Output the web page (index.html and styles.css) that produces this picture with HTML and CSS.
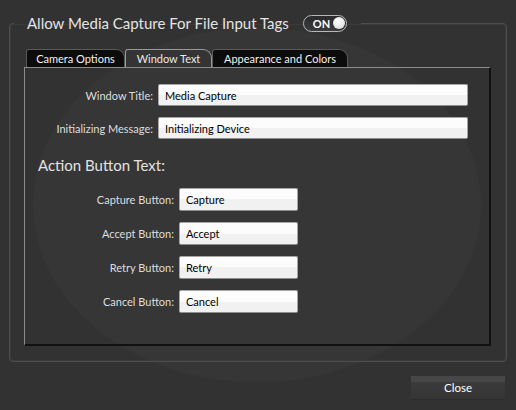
FILE: index.html
```html
<!DOCTYPE html>
<html>
<head>
<meta charset="utf-8">
<link rel="stylesheet" href="styles.css">
</head>
<body>
<div class="page">
  <fieldset class="group">
    <legend class="legend">
      <span class="title">Allow Media Capture For File Input Tags</span>
      <span class="toggle"><span class="toggle-text">ON</span><span class="knob"></span></span>
    </legend>
    <div class="inner">
      <div class="tabs">
        <div class="tab">Camera Options</div>
        <div class="tab active">Window Text</div>
        <div class="tab">Appearance and Colors</div>
      </div>
      <div class="panel">
        <div class="form wide">
          <label class="label">Window Title:</label>
          <input class="field" type="text" value="Media Capture">
          <label class="label">Initializing Message:</label>
          <input class="field" type="text" value="Initializing Device">
        </div>
        <div class="heading">Action Button Text:</div>
        <div class="form narrow">
          <label class="label">Capture Button:</label>
          <input class="field" type="text" value="Capture">
          <label class="label">Accept Button:</label>
          <input class="field" type="text" value="Accept">
          <label class="label">Retry Button:</label>
          <input class="field" type="text" value="Retry">
          <label class="label">Cancel Button:</label>
          <input class="field" type="text" value="Cancel">
        </div>
      </div>
    </div>
  </fieldset>
  <div class="footer">
    <button class="close">Close</button>
  </div>
</div>
</body>
</html>
```
FILE: styles.css
```css
html, body {
  margin: 0;
  padding: 0;
}
body {
  width: 516px;
  height: 410px;
  overflow: hidden;
  background: #323232;
  font-family: Lato, "Open Sans", sans-serif;
  color: #e2e2e2;
}
.page {
  width: 516px;
  height: 410px;
  box-sizing: border-box;
  padding-top: 13px;
  background: radial-gradient(225px 178px at 257px 205px, #363636 0, #363636 99%, #323232 100%);
  display: flex;
  flex-direction: column;
}
.group {
  margin: 0 9px 0 9px;
  padding: 0;
  min-inline-size: 0;
  border: 1px solid #4e4e4e;
  box-shadow: inset 0 0 0 1px #3a3a3a;
  border-radius: 4px;
}
.legend {
  margin-left: 4px;
  padding: 0 14px 0 13px;
  height: 20px;
  display: flex;
  align-items: center;
  gap: 14px;
}
.title {
  font-size: 15px;
  line-height: 20px;
  color: #e4e4e4;
}
.toggle {
  width: 44px;
  height: 17px;
  box-sizing: border-box;
  border: 1px solid #b8b8b8;
  border-radius: 9px;
  background: linear-gradient(#2a2a2a, #3c3c3c);
  display: flex;
  align-items: center;
  padding: 0 1px 0 9px;
  justify-content: space-between;
}
.toggle-text {
  font-size: 11px;
  font-weight: bold;
  color: #ffffff;
  line-height: 13px;
}
.knob {
  width: 12px;
  height: 12px;
  border-radius: 50%;
  background: radial-gradient(circle at 40% 35%, #ffffff, #d6d6d6);
}
.inner {
  margin: 16px 15px 15px 14px;
}
.tabs {
  display: flex;
  padding-left: 2px;
  height: 18px;
}
.tab {
  box-sizing: border-box;
  height: 18px;
  font-size: 11px;
  line-height: 17px;
  color: #f2f2f2;
  text-align: center;
  background: #0c0c0c;
  border: 1px solid #5a5a5a;
  border-bottom: none;
  border-radius: 3px 9px 0 0;
}
.tab:nth-child(1) { width: 99px; }
.tab:nth-child(2) { width: 87px; }
.tab:nth-child(3) { width: 136px; }
.tab.active {
  background: #343434;
  border-color: #9a9a9a;
  color: #eaeaea;
}
.panel {
  box-sizing: border-box;
  height: 279px;
  border-top: 1px solid #8c8c8c;
  border-left: 1px solid #8c8c8c;
  border-right: 2px solid #111111;
  border-bottom: 2px solid #111111;
  padding-top: 16px;
}
.form {
  display: grid;
  column-gap: 5px;
  align-items: center;
}
.form.wide {
  grid-template-columns: 128px 310px;
  row-gap: 11px;
}
.form.narrow {
  grid-template-columns: 149px 119px;
  row-gap: 11px;
}
.label {
  text-align: right;
  font-size: 11px;
  color: #dedede;
  white-space: nowrap;
}
.field {
  box-sizing: border-box;
  height: 22px;
  margin: 0;
  padding: 0 6px;
  border: 1px solid #a6a6a6;
  border-bottom-color: #8e8e8e;
  border-radius: 2px;
  background: linear-gradient(#fcfcfc 0, #fcfcfc 50%, #f1f1f1 50%, #f1f1f1 100%);
  font-family: Lato, "Open Sans", sans-serif;
  font-size: 11px;
  color: #000000;
  outline: none;
}
.form.narrow .field {
  height: 23px;
}
.heading {
  margin: 16px 0 13px 13px;
  font-size: 15px;
  line-height: 20px;
  color: #e2e2e2;
}
.footer {
  display: flex;
  justify-content: flex-end;
  padding: 14px 11px 0 0;
}
.close {
  width: 94px;
  height: 24px;
  margin: 0;
  padding: 0;
  border: none;
  border-bottom: 1px solid #2c2c2c;
  background: linear-gradient(#474747 0, #474747 6px, #3b3b3b 6px, #353535 100%);
  color: #ffffff;
  font-family: Lato, "Open Sans", sans-serif;
  font-size: 11.5px;
}
```
